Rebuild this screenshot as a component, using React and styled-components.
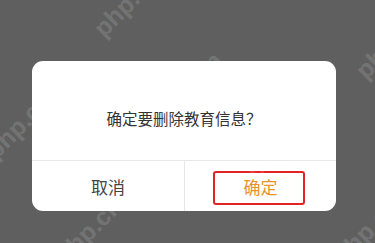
import React from 'react'
import styled, { createGlobalStyle } from 'styled-components'

const GlobalStyle = createGlobalStyle`
  html, body {
    margin: 0;
    padding: 0;
    background: #5f5f5f;
  }
  body {
    font-family: "Noto Sans CJK SC", "Noto Sans", sans-serif;
  }
`

const Page = styled.div`
  position: relative;
  width: 375px;
  height: 243px;
  overflow: hidden;
  box-sizing: border-box;
  padding: 61px 39px 0 32px;
  background: #5f5f5f;
`

const Dialog = styled.div`
  width: 304px;
  height: 150px;
  background: #fff;
  border-radius: 11px;
  overflow: hidden;
  display: flex;
  flex-direction: column;
`

const Message = styled.div`
  height: 100px;
  box-sizing: border-box;
  padding-top: 14px;
  display: flex;
  align-items: center;
  justify-content: center;
  font-size: 15.5px;
  color: #333;
  border-bottom: 1px solid #e6e6e6;
`

const Footer = styled.div`
  flex: 1;
  display: grid;
  grid-template-columns: 1fr 1fr;
`

const Action = styled.div`
  position: relative;
  display: flex;
  align-items: center;
  justify-content: center;
  font-size: 17px;
  color: ${p => (p.$primary ? '#e8922a' : '#444')};
  & + & {
    border-left: 1px solid #e6e6e6;
  }
`

const Highlight = styled.span`
  position: absolute;
  top: 10px;
  left: 28px;
  width: 92px;
  height: 34px;
  box-sizing: border-box;
  border: 2px solid #e42424;
  border-radius: 3px;
`

const Watermark = styled.span`
  position: absolute;
  left: ${p => p.$x}px;
  top: ${p => p.$y}px;
  transform: rotate(-45deg);
  transform-origin: left center;
  font-family: "Liberation Sans", Arial, sans-serif;
  font-weight: bold;
  font-size: 25px;
  color: rgba(255, 255, 255, 0.15);
  white-space: nowrap;
  pointer-events: none;
`

const marks = [
  { x: 98, y: 18 },
  { x: 160, y: 100 },
  { x: -10, y: 140 },
  { x: 60, y: 245 },
  { x: 338, y: 245 },
  { x: 250, y: 160 },
  { x: 360, y: 60 },
]

const App = () => {
  return (
    <>
      <GlobalStyle />
      <Page>
        <Dialog>
          <Message>确定要删除教育信息？</Message>
          <Footer>
            <Action>取消</Action>
            <Action $primary>
              确定
              <Highlight />
            </Action>
          </Footer>
        </Dialog>
        {marks.map((m, i) => (
          <Watermark key={i} $x={m.x} $y={m.y}>
            php.cn
          </Watermark>
        ))}
      </Page>
    </>
  )
}

export default App
